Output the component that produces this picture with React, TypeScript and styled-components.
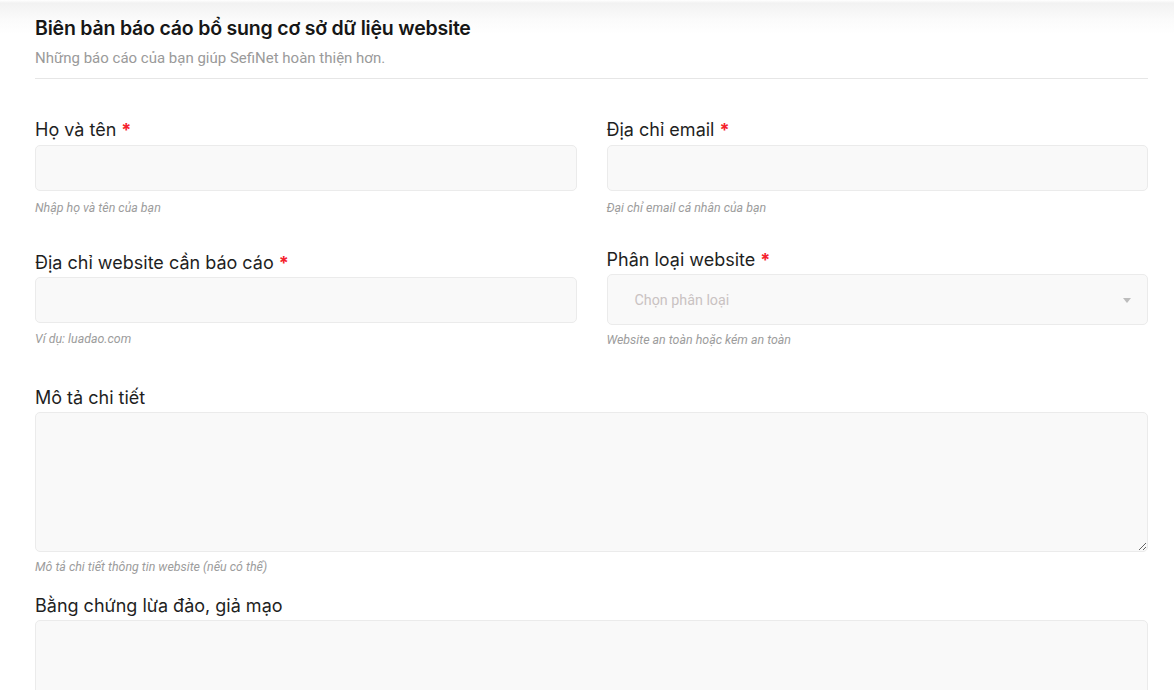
import React from "react";
import styled, { createGlobalStyle } from "styled-components";

const GlobalStyle = createGlobalStyle`
  html, body { margin: 0; padding: 0; background: #fff; }
  body {
    font-family: Inter, "Noto Sans", sans-serif;
    color: #1f1f1f;
    background-image: linear-gradient(to bottom, #ffffff 0px, #f2f2f2 3px, #fbfbfb 20px, #ffffff 34px);
    background-repeat: no-repeat;
    background-size: 100% 40px;
  }
  * { box-sizing: border-box; }
`;

const Page = styled.div`
  padding: 16px 26px 0 35px;
  width: 1174px;
  height: 690px;
  overflow: hidden;
`;

const Header = styled.header`
  display: flex;
  flex-direction: column;
  border-bottom: 1px solid #e6e6e6;
  padding-bottom: 10px;
`;

const Title = styled.h1`
  margin: 0;
  font-family: Inter, sans-serif;
  font-size: 19.5px;
  font-weight: 600;
  line-height: 24px;
  color: #161616;
  letter-spacing: -0.2px;
`;

const Subtitle = styled.p`
  margin: 8px 0 0;
  font-family: Roboto, "Liberation Sans", sans-serif;
  font-size: 15px;
  line-height: 20px;
  color: #9a9a9a;
`;

const Form = styled.form`
  display: flex;
  flex-direction: column;
  margin-top: 38px;
`;

const Row = styled.div<{ $mt?: number }>`
  display: grid;
  grid-template-columns: 1fr 1fr;
  column-gap: 30px;
  align-items: start;
  margin-top: ${(p) => p.$mt ?? 0}px;
`;

const Field = styled.div<{ $mt?: number }>`
  display: flex;
  flex-direction: column;
  margin-top: ${(p) => p.$mt ?? 0}px;
`;

const Label = styled.label<{ $gap?: number }>`
  font-family: Inter, sans-serif;
  font-size: 18px;
  line-height: 24px;
  padding-top: 1px;
  font-weight: 400;
  color: #1f1f1f;
  margin-bottom: ${(p) => p.$gap ?? 2}px;
`;

const Req = styled.span`
  color: #f5222d;
  font-weight: 700;
  margin-left: 5px;
`;

const Input = styled.input<{ $h?: number }>`
  height: ${(p) => p.$h ?? 46}px;
  width: 100%;
  background: #f9f9f9;
  border: 1px solid #ebebeb;
  border-radius: 5px;
  padding: 0 16px;
  font-family: Roboto, sans-serif;
  font-size: 14px;
  outline: none;
`;

const SelectBox = styled.div`
  height: 51px;
  background: #f9f9f9;
  border: 1px solid #ebebeb;
  border-radius: 5px;
  display: flex;
  align-items: center;
  justify-content: space-between;
  padding: 0 16px 0 27px;
`;

const Placeholder = styled.span`
  font-family: Roboto, sans-serif;
  font-size: 14.3px;
  color: #c9c2c2;
`;

const Caret = styled.span`
  width: 0;
  height: 0;
  border-left: 4px solid transparent;
  border-right: 4px solid transparent;
  border-top: 5px solid #bdbdbd;
  margin-top: 1px;
`;

const TextArea = styled.textarea<{ $h: number }>`
  height: ${(p) => p.$h}px;
  width: 100%;
  display: block;
  background: #f9f9f9;
  border: 1px solid #ebebeb;
  border-radius: 5px;
  padding: 10px 16px;
  font-family: Roboto, sans-serif;
  font-size: 14px;
  outline: none;
`;

const Hint = styled.span<{ $mt?: number }>`
  margin-top: ${(p) => p.$mt ?? 9}px;
  font-family: Roboto, "Liberation Sans", sans-serif;
  font-style: italic;
  font-size: 12.4px;
  line-height: 16px;
  color: #9c9c9c;
`;

export default function App() {
  return (
    <>
      <GlobalStyle />
      <Page>
        <Header>
          <Title>Biên bản báo cáo bổ sung cơ sở dữ liệu website</Title>
          <Subtitle>Những báo cáo của bạn giúp SefiNet hoàn thiện hơn.</Subtitle>
        </Header>
        <Form onSubmit={(e) => e.preventDefault()}>
          <Row>
            <Field>
              <Label $gap={3}>
                Họ và tên<Req>*</Req>
              </Label>
              <Input />
              <Hint>Nhập họ và tên của bạn</Hint>
            </Field>
            <Field>
              <Label $gap={3}>
                Địa chỉ email<Req>*</Req>
              </Label>
              <Input />
              <Hint>Đại chỉ email cá nhân của bạn</Hint>
            </Field>
          </Row>
          <Row $mt={31}>
            <Field $mt={3}>
              <Label>
                Địa chỉ website cần báo cáo<Req>*</Req>
              </Label>
              <Input />
              <Hint $mt={8}>Ví dụ: luadao.com</Hint>
            </Field>
            <Field>
              <Label>
                Phân loại website<Req>*</Req>
              </Label>
              <SelectBox>
                <Placeholder>Chọn phân loại</Placeholder>
                <Caret />
              </SelectBox>
              <Hint $mt={7}>Website an toàn hoặc kém an toàn</Hint>
            </Field>
          </Row>
          <Field $mt={37}>
            <Label>Mô tả chi tiết</Label>
            <TextArea $h={140} />
            <Hint $mt={7}>Mô tả chi tiết thông tin website (nếu có thể)</Hint>
          </Field>
          <Field $mt={18}>
            <Label>Bằng chứng lừa đảo, giả mạo</Label>
            <TextArea $h={140} />
          </Field>
        </Form>
      </Page>
    </>
  );
}
